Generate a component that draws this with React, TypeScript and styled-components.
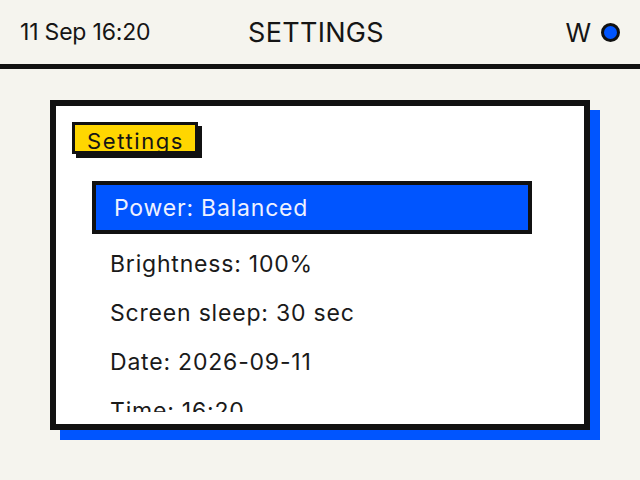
import React from 'react';
import styled, {createGlobalStyle} from 'styled-components';

const GlobalStyle = createGlobalStyle`
  html, body {
    margin: 0;
    padding: 0;
    background: #f5f4ee;
    font-family: Inter, "Noto Sans", sans-serif;
    color: #151515;
  }
`

const Screen = styled.div`
  width: 640px;
  height: 480px;
  overflow: hidden;
  background: #f5f4ee;
`

const TopBar = styled.header`
  height: 64px;
  border-bottom: 5px solid #111;
  display: flex;
  align-items: center;
  justify-content: space-between;
  padding: 0 20px;
`

const Clock = styled.div`
  font-size: 23px;
  letter-spacing: -0.2px;
  width: 152px;
`

const Title = styled.div`
  font-size: 27px;
  letter-spacing: 0.3px;
  text-align: center;
`

const Status = styled.div`
  width: 160px;
  display: flex;
  justify-content: flex-end;
  align-items: center;
  gap: 10px;
  font-size: 26px;
`

const Dot = styled.span`
  width: 13px;
  height: 13px;
  border-radius: 50%;
  border: 3px solid #111;
  background: #0055ff;
`

const Panel = styled.section`
  margin: 31px 0 0 50px;
  width: 540px;
  height: 330px;
  box-sizing: border-box;
  border: 6px solid #111;
  background: #fff;
  box-shadow: 10px 10px 0 #0055ff;
  padding: 16px 0 12px 16px;
  display: flex;
  flex-direction: column;
`

const Tag = styled.div`
  align-self: flex-start;
  background: #ffd600;
  border: 3px solid #111;
  box-shadow: 4px 4px 0 #111;
  height: 26px;
  width: 108px;
  box-sizing: content-box;
  padding: 0 0 0 12px;
  font-size: 22px;
  line-height: 32px;
  letter-spacing: 1.6px;
  margin-bottom: 27px;
  overflow: hidden;
  white-space: nowrap;
`

const List = styled.ul`
  list-style: none;
  margin: 0;
  padding: 0 0 0 16px;
  flex: 1;
  overflow: hidden;
`

const Item = styled.li<{ $active?: boolean }>`
  width: 440px;
  box-sizing: border-box;
  height: ${p => (p.$active ? '53px' : '49px')};
  margin-bottom: ${p => (p.$active ? '5px' : '0')};
  border: 4px solid ${p => (p.$active ? '#111' : 'transparent')};
  background: ${p => (p.$active ? '#0055ff' : 'transparent')};
  color: ${p => (p.$active ? '#eef1ff' : '#1a1a1a')};
  transform: ${p => (p.$active ? 'translateX(4px)' : 'none')};
  padding: 0 18px;
  display: flex;
  align-items: center;
  font-size: 23px;
  letter-spacing: 0.8px;
  white-space: nowrap;
`

const items = [
    'Power: Balanced',
    'Brightness: 100%',
    'Screen sleep: 30 sec',
    'Date: 2026-09-11',
    'Time: 16:20',
]

function App() {
    return (
        <>
            <GlobalStyle/>
            <Screen>
                <TopBar>
                    <Clock>11 Sep 16:20</Clock>
                    <Title>SETTINGS</Title>
                    <Status>
                        W
                        <Dot/>
                    </Status>
                </TopBar>
                <Panel>
                    <Tag>Settings</Tag>
                    <List>
                        {items.map((label, i) => (
                            <Item key={label} $active={i === 0}>{label}</Item>
                        ))}
                    </List>
                </Panel>
            </Screen>
        </>
    );
}

export default App;
